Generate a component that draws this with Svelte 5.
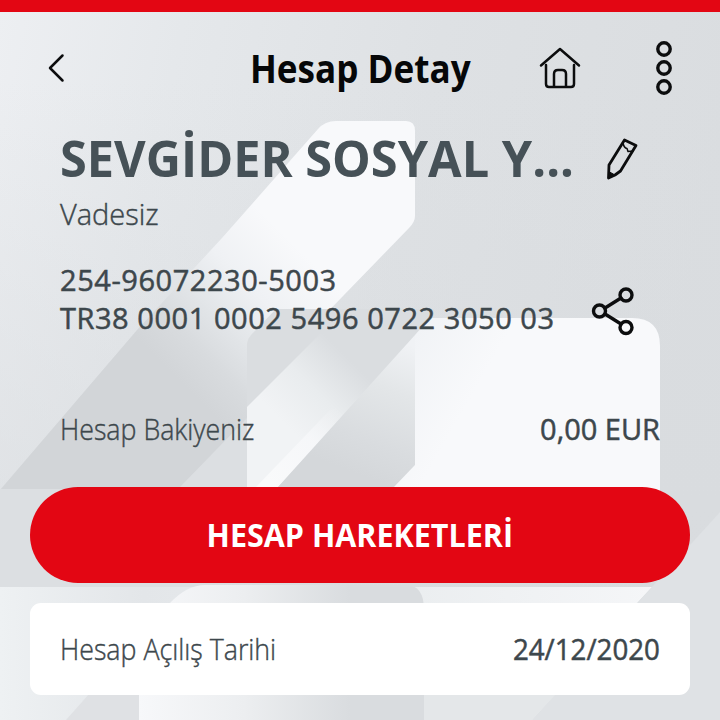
<script lang="ts">
	const account = {
		name: 'SEVGİDER SOSYAL Y...',
		type: 'Vadesiz',
		number: '254-96072230-5003',
		iban: 'TR38 0001 0002 5496 0722 3050 03',
		balance: '0,00 EUR',
		opened: '24/12/2020'
	};
</script>

<main class="screen">
	<svg class="backdrop" viewBox="0 0 720 720" aria-hidden="true">
		<defs>
			<linearGradient id="base" x1="0" y1="0" x2="1" y2="0.2">
				<stop offset="0" stop-color="#edeff2" />
				<stop offset="0.25" stop-color="#e5e8eb" />
				<stop offset="0.6" stop-color="#dee1e4" />
				<stop offset="1" stop-color="#dadde0" />
			</linearGradient>
			<linearGradient id="baseShade" x1="0" y1="0" x2="0" y2="1">
				<stop offset="0" stop-color="#d9dcdf" stop-opacity="0" />
				<stop offset="1" stop-color="#d8dbde" stop-opacity="0.9" />
			</linearGradient>
			<linearGradient id="band" gradientUnits="userSpaceOnUse" x1="300" y1="250" x2="175" y2="375">
				<stop offset="0" stop-color="#f8f9fb" />
				<stop offset="0.35" stop-color="#eff1f4" />
				<stop offset="0.6" stop-color="#e2e5e8" />
				<stop offset="0.8" stop-color="#d8dbde" />
				<stop offset="1" stop-color="#d2d5d8" />
			</linearGradient>
			<linearGradient id="card" gradientUnits="userSpaceOnUse" x1="400" y1="360" x2="470" y2="400">
				<stop offset="0" stop-color="#f1f3f6" />
				<stop offset="1" stop-color="#f8f9fb" />
			</linearGradient>
			<linearGradient id="stripe" gradientUnits="userSpaceOnUse" x1="285" y1="425" x2="350" y2="360">
				<stop offset="0" stop-color="#f1f3f5" />
				<stop offset="0.5" stop-color="#e9ecee" />
				<stop offset="1" stop-color="#dadde0" />
			</linearGradient>
			<linearGradient id="shine" gradientUnits="userSpaceOnUse" x1="265" y1="480" x2="335" y2="405">
				<stop offset="0" stop-color="#f9fafb" />
				<stop offset="0.6" stop-color="#f7f8fa" stop-opacity="0.8" />
				<stop offset="1" stop-color="#f4f5f7" stop-opacity="0" />
			</linearGradient>
			<linearGradient id="foldDark" gradientUnits="userSpaceOnUse" x1="410" y1="345" x2="360" y2="475">
				<stop offset="0" stop-color="#f0f2f5" />
				<stop offset="0.35" stop-color="#e3e6e8" />
				<stop offset="0.75" stop-color="#d9dcdf" />
				<stop offset="1" stop-color="#d4d7da" />
			</linearGradient>
			<linearGradient id="lower" x1="0" y1="0" x2="1" y2="0">
				<stop offset="0" stop-color="#eef1f3" />
				<stop offset="0.22" stop-color="#e3e6e9" />
				<stop offset="0.6" stop-color="#eaedef" />
				<stop offset="1" stop-color="#f5f6f8" />
			</linearGradient>
			<linearGradient id="tab" gradientUnits="userSpaceOnUse" x1="139" y1="0" x2="350" y2="0">
				<stop offset="0" stop-color="#f7f8fa" />
				<stop offset="0.5" stop-color="#eceef0" />
				<stop offset="1" stop-color="#d9dcdf" />
			</linearGradient>
		</defs>
		<rect width="720" height="720" fill="url(#base)" />
		<rect y="80" width="720" height="520" fill="url(#baseShade)" opacity="0.75" />
		<path d="M0 490 137 330 222 238 318 129Q325 121 336 121H406Q415 121 415 131V216Q415 222 409 228L247 395V490Z" fill="url(#band)" />
		<path d="M180 487 247 418V487Z" fill="#dcdfe2" />
		<path d="M247 345Q247 340 251 335L276 309H335L434 309V337L278 487H247Z" fill="#dadde0" />
		<path d="M247 407 330 324H427L278 487H247Z" fill="url(#stripe)" />
		<path d="M256 487 330 410 357 401 278 487Z" fill="url(#shine)" />
		<path d="M278 487 415 335V465L394 487Z" fill="url(#foldDark)" />
		<path d="M394 487 415 465V335L430 318H632Q660 318 660 346V500H394Z" fill="url(#card)" />
		<rect y="489" width="200" height="98" fill="#dcdfe2" />
		<path d="M0 587H652L638 602 532 720H0Z" fill="url(#lower)" />
		<path d="M720 512V720H532L652 587 690 545Z" fill="#dfe2e5" />
		<path d="M66 720 90 693H139V720Z" fill="#dfe1e4" />
		<path d="M170 603Q187 585 205 585H406Q424 585 424 610V720H139V650Z" fill="url(#tab)" />
		<path d="M424 694H556L532 720H424Z" fill="#e4e7e9" />
	</svg>

	<div class="status-strip"></div>

	<header class="topbar">
		<button class="icon-button back" aria-label="Geri">
			<svg width="18" height="30" viewBox="0 0 18 30">
				<path d="M15.5 2.5 3 15 15.500 27.500" />
			</svg>
		</button>
		<h1>Hesap Detay</h1>
		<button class="icon-button home" aria-label="Ana sayfa">
			<svg width="42" height="44" viewBox="0 0 42 44">
				<path d="M2 19.500 21 3 40 19.500M7 19V38Q7 41 10 41H32Q35 41 35 38V19M15 41V28Q15 24 19 24H23Q27 24 27 28V41" />
			</svg>
		</button>
		<button class="icon-button more" aria-label="Menü">
			<svg width="18" height="54" viewBox="0 0 18 54">
				<circle cx="9" cy="8" r="6.200" />
				<circle cx="9" cy="27" r="6.200" />
				<circle cx="9" cy="46" r="6.200" />
			</svg>
		</button>
	</header>

	<section class="account">
		<div class="name-row">
			<h2>{account.name}</h2>
			<button class="icon-button" aria-label="Düzenle">
				<svg class="pencil" width="34" height="44" viewBox="0 0 34 44">
					<path d="M19.500 3 31 8.500 15.500 34 10 38 3.500 41 4 28Z" />
					<path class="thin" d="M18 6Q19 11 22 11.500L23 14.500 28 14" />
					<path class="tip" d="M3.500 41 3.700 34.500 10 38Z" />
				</svg>
			</button>
		</div>
		<p class="type">{account.type}</p>

		<div class="iban-row">
			<div class="numbers">
				<p class="number">{account.number}</p>
				<p class="iban">{account.iban}</p>
			</div>
			<button class="icon-button share-button" aria-label="Paylaş">
				<svg class="share" width="44" height="50" viewBox="0 0 44 50">
					<path d="M14 22 30 12M14 28 30 38" />
					<circle cx="8.500" cy="25" r="6" />
					<circle cx="35" cy="9" r="6" />
					<circle cx="35" cy="41.500" r="6" />
				</svg>
			</button>
		</div>

		<div class="row balance">
			<span class="label">Hesap Bakiyeniz</span>
			<span class="value">{account.balance}</span>
		</div>
	</section>

	<button class="cta"><span>HESAP HAREKETLERİ</span></button>

	<section class="row detail">
		<span class="label">Hesap Açılış Tarihi</span>
		<span class="value date">{account.opened}</span>
	</section>
</main>

<style>
	:global(body) {
		margin: 0;
		background: #dfe2e5;
	}

	.screen {
		position: relative;
		width: 720px;
		height: 720px;
		overflow: hidden;
		isolation: isolate;
		font-family: 'Open Sans', 'Noto Sans', sans-serif;
		color: #3d474c;
	}

	.backdrop {
		position: absolute;
		inset: 0;
		z-index: -1;
	}

	h1,
	h2,
	p {
		margin: 0;
		white-space: nowrap;
	}

	.status-strip {
		height: 12px;
		background: #e30613;
	}

	.topbar {
		display: grid;
		grid-template-columns: 203px 314px 91px 1fr;
		align-items: center;
		height: 112px;
		padding: 0 47px;
		box-sizing: border-box;
	}

	h1 {
		font-size: 39px;
		font-weight: 700;
		line-height: 48px;
		transform: scaleX(0.9);
		transform-origin: left;
		color: #060708;
	}

	.icon-button {
		display: flex;
		padding: 0;
		border: 0;
		background: none;
		color: #0c0d0e;
		cursor: pointer;
	}

	.icon-button svg {
		fill: none;
		stroke: currentColor;
		stroke-width: 2.5;
		stroke-linecap: round;
		stroke-linejoin: round;
	}

	.home {
		margin-left: -25px;
	}

	.more svg,
	.icon-button .share {
		stroke-width: 3.4;
	}

	.icon-button .pencil {
		stroke-width: 2.8;
	}

	.icon-button .thin {
		stroke-width: 1.5;
	}

	.icon-button .tip {
		fill: currentColor;
		stroke-width: 1;
	}

	.account {
		height: 363px;
		padding: 0 60px;
	}

	.name-row {
		display: flex;
		align-items: center;
		height: 70px;
	}

	h2 {
		width: 545px;
		font-size: 51px;
		font-weight: 700;
		line-height: 66px;
		padding-bottom: 4px;
		transform: scaleX(0.955);
		transform-origin: left;
		color: #465157;
	}

	.type {
		font-size: 29px;
		font-weight: 300;
		line-height: 40px;
		-webkit-text-stroke: 0.4px;
	}

	.iban-row {
		display: flex;
		align-items: flex-start;
		height: 78px;
		margin-top: 27px;
	}

	.numbers {
		width: 531px;
		font-size: 29px;
		font-weight: 400;
		line-height: 38px;
		letter-spacing: 0.55px;
		-webkit-text-stroke: 0.5px;
	}

	.share-button {
		margin-top: 25px;
	}

	.row {
		display: flex;
		align-items: center;
		justify-content: space-between;
		font-size: 29px;
		line-height: 40px;
	}

	.balance {
		margin-top: 70px;
	}

	.label {
		font-weight: 300;
		-webkit-text-stroke: 0.4px;
		transform: scaleX(0.922);
		transform-origin: left;
	}

	.value {
		font-weight: 400;
		-webkit-text-stroke: 0.5px;
	}

	.date {
		transform: scaleX(0.955);
		transform-origin: right;
	}

	.cta {
		display: block;
		width: 660px;
		height: 96px;
		margin: 0 30px;
		padding: 0;
		border: 0;
		border-radius: 48px;
		background: #e30613;
		font: 700 32px/96px 'Open Sans', 'Noto Sans', sans-serif;
		color: #fff;
		cursor: pointer;
	}

	.cta span {
		display: inline-block;
		transform: scaleX(0.953);
	}

	.detail {
		height: 92px;
		margin: 20px 30px 0;
		padding: 0 30px;
		border-radius: 11px;
		background: #fff;
	}
</style>
